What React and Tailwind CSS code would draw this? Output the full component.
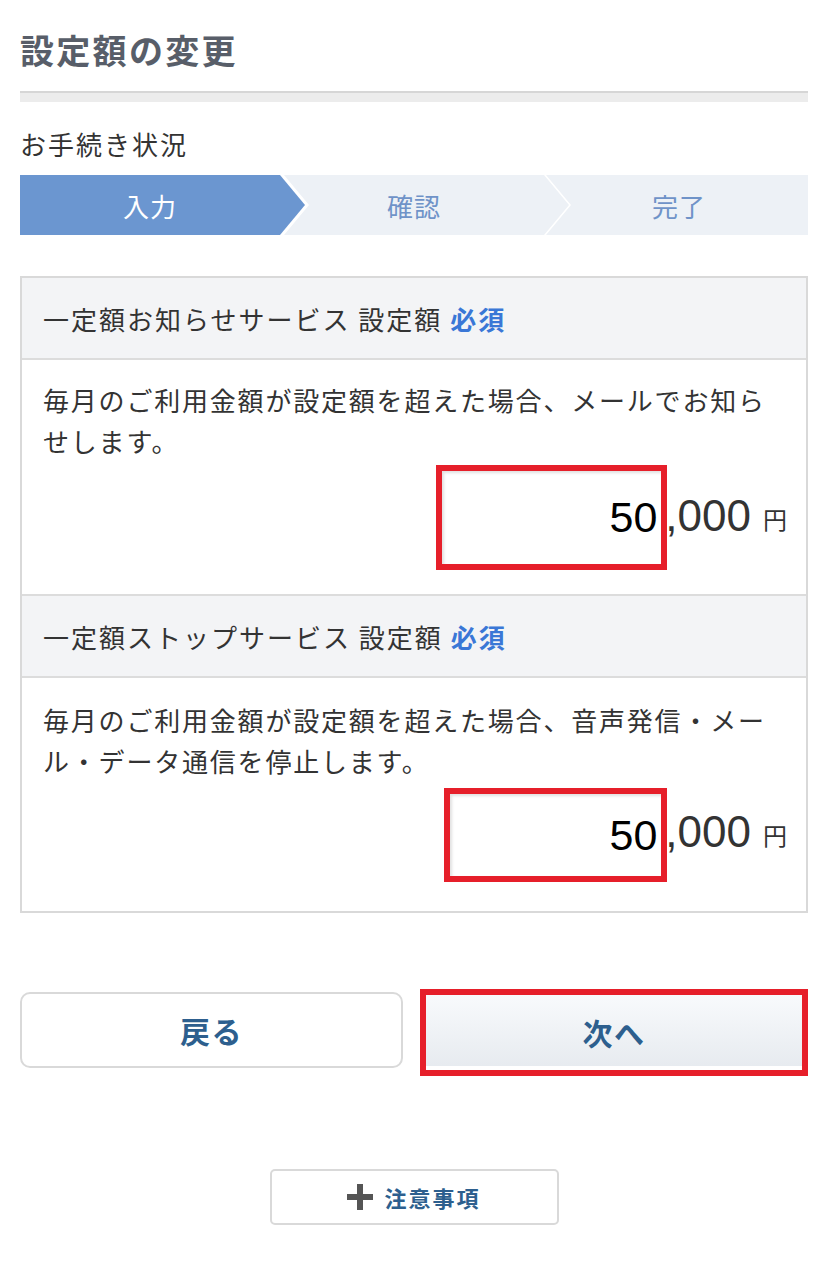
import React from 'react';

const jp = { fontFamily: '"Noto Sans CJK JP", "Noto Sans", sans-serif' };
const num = { fontFamily: '"Liberation Sans", Arial, sans-serif' };

function AmountRow({ boxClass }) {
  return (
    <div className="flex items-center justify-end">
      <div className={`flex items-center justify-end border-[6px] border-[#e61f2a] bg-white shadow-[inset_2px_2px_3px_rgba(0,0,0,0.12)] pr-[4px] ${boxClass}`}>
        <span className="text-[43px] leading-none text-black" style={num}>50</span>
      </div>
      <span className="-ml-[2px] text-[44px] leading-none text-[#333]" style={num}>,000</span>
      <span className="ml-[12px] mt-[6px] text-[24px] leading-none text-[#333]">円</span>
    </div>
  );
}

function Section({ title, text, bodyClass, boxClass }) {
  return (
    <>
      <div className="h-[82px] flex items-center px-[21px] bg-[#f3f4f6] border-b-2 border-[#dcdcdc] text-[26px] tracking-[2px] text-[#333]">
        {title}
        <span className="ml-[8px] font-bold text-[#3a77d6]">必須</span>
      </div>
      <div className={`pl-[21px] pr-[19px] ${bodyClass}`}>
        <p className="text-[26px] tracking-[1.8px] leading-[41px] text-[#333]">{text}</p>
        <AmountRow boxClass={boxClass} />
      </div>
    </>
  );
}

export default function App() {
  return (
    <div className="w-[828px] min-h-[1273px] bg-white px-[20px] pt-[26px]" style={jp}>
      <h1 className="text-[34px] tracking-[2.3px] font-bold text-[#585e69] leading-[48px]">設定額の変更</h1>
      <div className="mt-[17px] h-[11px] bg-[#ececec] border-t-2 border-[#d6d6d6]" />
      <p className="mt-[24px] text-[26px] tracking-[2px] leading-[36px] text-[#333]">お手続き状況</p>

      <div className="mt-[13px] flex h-[60px] text-[26px] tracking-[1px]">
        <div className="w-[285px] shrink-0 flex items-center justify-center pr-[25px] bg-[#6b96d0] text-white [clip-path:polygon(0_0,260px_0,285px_50%,260px_100%,0_100%)]">
          入力
        </div>
        <div className="w-[285px] shrink-0 -ml-[21px] flex items-center justify-center pr-[25px] bg-[#edf1f6] text-[#6f93c8] [clip-path:polygon(0_0,260px_0,285px_50%,260px_100%,0_100%,25px_50%)]">
          確認
        </div>
        <div className="w-[262px] shrink-0 -ml-[23px] flex items-center justify-center pl-[4px] bg-[#edf1f6] text-[#6f93c8] [clip-path:polygon(0_0,100%_0,100%_100%,0_100%,25px_50%)]">
          完了
        </div>
      </div>

      <div className="mt-[41px] border-2 border-[#d9d9d9]">
        <Section
          title="一定額お知らせサービス 設定額"
          text="毎月のご利用金額が設定額を超えた場合、メールでお知らせします。"
          bodyClass="pt-[19px] pb-[24px] border-b-2 border-[#dcdcdc]"
          boxClass="w-[231px] h-[105px] mt-[4px]"
        />
        <Section
          title="一定額ストップサービス 設定額"
          text="毎月のご利用金額が設定額を超えた場合、音声発信・メール・データ通信を停止します。"
          bodyClass="pt-[21px] pb-[29px]"
          boxClass="w-[223px] h-[94px] mt-[7px]"
        />
      </div>

      <div className="mt-[76px] flex items-start gap-[17px]">
        <button className="w-[383px] h-[76px] mt-[3px] rounded-[10px] border-2 border-[#d9d9d9] bg-white text-[30px] tracking-[1.5px] font-bold text-[#2d5f8e]">
          戻る
        </button>
        <button className="w-[388px] h-[87px] border-[6px] border-[#e61f2a] bg-gradient-to-b from-[#f8fafc] to-[#e6eaef] text-[30px] tracking-[1.5px] font-bold text-[#2d5f8e] shadow-[inset_0_-4px_0_#ffffff]">
          次へ
        </button>
      </div>

      <div className="mt-[93px] flex justify-center">
        <button className="w-[289px] h-[56px] rounded-[5px] border-2 border-[#d9d9d9] bg-white flex items-center justify-center gap-[11px] text-[22px] tracking-[2px] font-bold text-[#2d5f8e]">
          <svg width="26" height="26" viewBox="0 0 26 26">
            <rect x="10" y="0" width="6" height="26" fill="#555" />
            <rect x="0" y="10" width="26" height="6" fill="#555" />
          </svg>
          注意事項
        </button>
      </div>
    </div>
  );
}
